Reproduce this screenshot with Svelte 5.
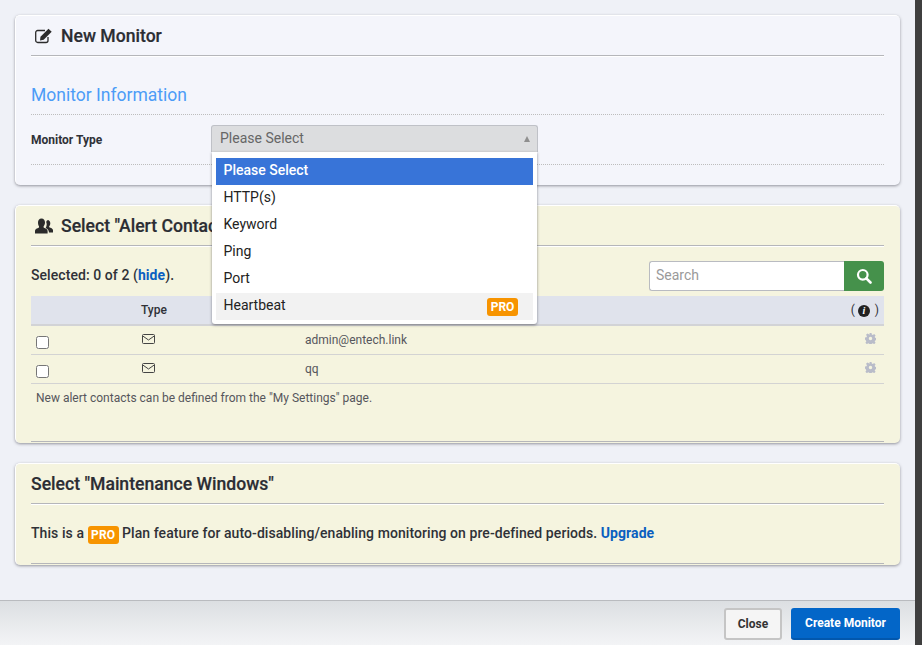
<script>
  let selected = 0;
  const contacts = ['admin@entech.link', 'qq'];
  const options = ['Please Select', 'HTTP(s)', 'Keyword', 'Ping', 'Port', 'Heartbeat'];
</script>

<div class="window">
  <div class="body">
    <section class="card blue first">
      <h2>
        <svg class="ico" width="18" height="16" viewBox="0 0 18 16">
          <path d="M13 9v3.500a2 2 0 0 1-2 2H2.700a2 2 0 0 1-2-2V4.500a2 2 0 0 1 2-2H10" fill="none" stroke="#2b2b2b" stroke-width="1.300"/>
          <path d="M5.500 8.800 13.500 0.800l3.200 3-8 8-3.700.6z" fill="#2b2b2b"/>
        </svg>
        New Monitor
      </h2>
      <h3>Monitor Information</h3>
      <div class="field">
        <label for="type">Monitor Type</label>
        <div class="select" id="type">
          <div class="trigger">
            <span>Please Select</span>
            <i class="arrow"></i>
          </div>
          <ul class="menu">
            {#each options as opt, i}
              <li class:active={i === 0} class:pro-row={i === 5}>
                {opt}
                {#if i === 5}<span class="pro">PRO</span>{/if}
              </li>
            {/each}
          </ul>
        </div>
      </div>
    </section>

    <section class="card yellow second">
      <h2>
        <svg class="ico" width="18" height="16" viewBox="0 0 18 16">
          <path d="M6.500 0.500c2.300 0 3.500 1.800 3.500 4 0 1.500-.6 2.900-1.400 3.700v1.300c1.900.8 4 1.700 4 3.300v2.700H0v-2.700c0-1.600 2.100-2.500 4-3.300V8.200C3.300 7.400 3 6 3 4.500c0-2.200 1.200-4 3.500-4z" fill="#2b2b2b"/>
          <path d="M12.500 2c1.700 0 2.800 1.400 2.800 3.200 0 1.200-.5 2.300-1.100 3v1c1.500.6 3.800 1.400 3.800 2.900v2.400h-4c0-2.400-1.500-3.600-3.300-4.500.6-1 1-2.300 1-3.500 0-1-.2-1.700-.5-2.500.4-1.200.9-2 2.300-2z" fill="#2b2b2b"/>
        </svg>
        Select "Alert Contacts To Notify"
      </h2>
      <div class="toolbar">
        <div class="count">Selected: {selected} of {contacts.length} (<a href="#hide">hide</a>).</div>
        <div class="search">
          <input placeholder="Search" />
          <button aria-label="Search">
            <svg width="16" height="16" viewBox="0 0 16 16">
              <circle cx="6.800" cy="6.800" r="4.800" fill="none" stroke="#fff" stroke-width="2.200"/>
              <path d="M10.300 10.300 14.500 14.500" stroke="#fff" stroke-width="2.600" stroke-linecap="round"/>
            </svg>
          </button>
        </div>
      </div>
      <table>
        <thead>
          <tr>
            <th class="c1"></th>
            <th class="c2">Type</th>
            <th class="c3"></th>
            <th class="c4">( <span class="info">i</span> )</th>
          </tr>
        </thead>
        <tbody>
          {#each contacts as c}
            <tr>
              <td><input type="checkbox" /></td>
              <td>
                <svg class="mail" width="13" height="10" viewBox="0 0 13 10">
                  <rect x="0.500" y="0.500" width="12" height="9" rx="1" fill="none" stroke="#444" />
                  <path d="M0.800 2 6.500 6 12.200 2" fill="none" stroke="#444" />
                </svg>
              </td>
              <td>{c}</td>
              <td class="gear-cell">
                <svg width="11" height="11" viewBox="0 0 16 16">
                  <path d="M6.500 0h3l.4 2.200 1.500.6 1.900-1.300 2.100 2.100-1.300 1.900.6 1.500 2.300.4v3l-2.300.4-.6 1.500 1.300 1.900-2.100 2.100-1.900-1.300-1.500.6-.4 2.300h-3l-.4-2.300-1.500-.6-1.900 1.300-2.100-2.100 1.300-1.900-.6-1.500L0 9.500v-3l2.200-.4.6-1.500L1.500 2.700l2.100-2.100 1.900 1.300L7 2.200z M8 5.500a2.500 2.500 0 1 0 0 5 2.500 2.500 0 0 0 0-5z" fill="#b9bcc9" fill-rule="evenodd"/>
                </svg>
              </td>
            </tr>
          {/each}
        </tbody>
      </table>
      <p class="note">New alert contacts can be defined from the "My Settings" page.</p>
      <div class="rule"></div>
    </section>

    <section class="card yellow third">
      <h2>Select "Maintenance Windows"</h2>
      <p class="upsell">
        This is a <span class="pro big">PRO</span> Plan feature for auto-disabling/enabling monitoring on pre-defined periods. <a href="#upgrade">Upgrade</a>
      </p>
      <div class="rule"></div>
    </section>
  </div>

  <footer>
    <button class="btn close">Close</button>
    <button class="btn create">Create Monitor</button>
  </footer>
</div>

<style>
  :global(body) {
    margin: 0;
    background: #3f3f3f;
    font-family: Roboto, "Liberation Sans", sans-serif;
    color: #2f3137;
  }

  .window {
    width: 915px;
    height: 645px;
    background: #eff1f7;
    display: flex;
    flex-direction: column;
    overflow: hidden;
  }

  .body {
    flex: 1;
    padding: 15px 15px 0;
    box-sizing: border-box;
  }

  .card {
    position: relative;
    box-sizing: border-box;
    padding: 0 16px 0 15px;
    border-radius: 5px;
    box-shadow: 0 1px 3px rgba(70, 70, 80, 0.55);
    border-top: 1px solid #fff;
    border-left: 1px solid #fff;
  }

  .blue { background: #f4f5fb; }
  .yellow { background: #f5f4df; }

  .first { height: 170px; margin-bottom: 20px; }
  .second { height: 238px; margin-bottom: 20px; }
  .third { height: 102px; }

  h2 {
    margin: 0;
    height: 40px;
    box-sizing: border-box;
    padding-top: 1px;
    font-size: 17.600px;
    line-height: 21px;
    font-weight: 500;
    display: flex;
    align-items: center;
    gap: 8px;
    color: #2b2d33;
    border-bottom: 1px solid #b5b6ba;
    box-shadow: 0 1px 0 #fff;
    -webkit-text-stroke: 0.2px #2b2d33;
  }

  .ico { margin-left: 4px; }

  h3 {
    margin: 28px 0 0;
    height: 31px;
    font-size: 17.500px;
    line-height: 22px;
    font-weight: 400;
    color: #4c9cf7;
    border-bottom: 1px dotted #bdbdbd;
    box-sizing: border-box;
  }

  .field {
    display: flex;
    align-items: flex-start;
    height: 50px;
    box-sizing: border-box;
    padding-top: 10px;
    border-bottom: 1px dotted #bdbdbd;
  }

  label {
    width: 180px;
    font-size: 12px;
    font-weight: 700;
    line-height: 30px;
  }

  .select {
    position: relative;
    width: 327px;
  }

  .trigger {
    height: 27px;
    box-sizing: border-box;
    background: #dcdddf;
    border: 1px solid #bfc1c7;
    border-bottom: 0;
    border-radius: 3px 3px 0 0;
    padding: 0 8px;
    font-size: 14px;
    line-height: 24px;
    color: #666;
    display: flex;
    justify-content: space-between;
    align-items: flex-start;
  }

  .arrow {
    width: 0;
    height: 0;
    border-left: 3.500px solid transparent;
    border-right: 3.500px solid transparent;
    border-bottom: 6px solid #8f8f8f;
    margin-right: -1px;
    margin-top: 10px;
  }

  .menu {
    position: absolute;
    top: 27px;
    left: 1px;
    right: 1px;
    z-index: 5;
    margin: 0;
    padding: 6px 4px 4px;
    list-style: none;
    background: #fff;
    border-radius: 0 0 3px 3px;
    box-shadow: 0 1px 3px rgba(60, 60, 70, 0.6);
  }

  .menu li {
    height: 27px;
    padding: 0 15px 0 7.500px;
    font-size: 14px;
    line-height: 25px;
    color: #222;
    display: flex;
    justify-content: space-between;
    align-items: flex-start;
  }

  .menu li.active { background: #3874d8; color: #fff; font-weight: 500; }
  .menu li.pro-row { background: #f2f2f2; }

  .pro {
    display: inline-block;
    background: #f79400;
    color: #fff;
    font-size: 12px;
    font-weight: 700;
    line-height: 18px;
    height: 18px;
    width: 31px;
    text-align: center;
    border-radius: 3px;
    margin-top: 5px;
  }

  .pro.big { margin-top: 0; vertical-align: -1px; }

  .toolbar {
    display: flex;
    justify-content: space-between;
    align-items: center;
    box-sizing: border-box;
    height: 50px;
    padding-top: 10px;
  }

  .count {
    font-size: 14px;
    font-weight: 500;
    letter-spacing: 0.07px;
    margin-bottom: 2px;
  }

  a {
    color: #0a5fc0;
    text-decoration: none;
    font-weight: 700;
  }

  .search {
    display: flex;
    height: 30px;
    width: 235px;
  }

  .search input {
    flex: 1;
    min-width: 0;
    box-sizing: border-box;
    border: 1px solid #b9bbc1;
    border-right: 0;
    border-radius: 3px 0 0 3px;
    padding: 0 6px 2px;
    font-family: inherit;
    font-size: 14px;
    background: #fff;
    outline: none;
  }

  .search input::placeholder { color: #9a9a9a; }

  .search button {
    width: 40px;
    border: 0;
    padding: 0;
    background: #45914b;
    border-radius: 0 3px 3px 0;
    display: flex;
    align-items: center;
    justify-content: center;
  }

  table {
    width: 100%;
    border-collapse: collapse;
    table-layout: fixed;
    font-size: 12px;
  }

  th {
    height: 28px;
    background: #e0e3ec;
    border-bottom: 2px solid #d2d3d6;
    font-weight: 500;
    text-align: left;
    padding: 0;
  }

  .c1 { width: 110px; }
  .c2 { width: 164px; }
  .c4 { width: 80px; text-align: right; padding-right: 5px; font-weight: 400; }

  .info {
    display: inline-block;
    width: 12px;
    height: 12px;
    border-radius: 50%;
    background: #222;
    color: #fff;
    font: italic 700 10px/12px "Liberation Serif", serif;
    text-align: center;
    margin: 0 2px 0 0;
  }

  td {
    height: 28px;
    padding: 0;
    border-bottom: 1px solid #d3d3d3;
    color: #55565c;
    vertical-align: middle;
  }

  td input {
    margin: 4px 0 0 5px;
    width: 13px;
    height: 13px;
    display: block;
  }

  .mail { display: block; margin: 0 0 2px 1px; }

  .gear-cell { text-align: right; padding-right: 8px; }
  .gear-cell svg { vertical-align: middle; margin-bottom: 3px; }

  .note {
    margin: 0;
    padding: 7px 0 0 5px;
    font-size: 12px;
    line-height: 14px;
    color: #55565c;
  }

  .rule {
    position: absolute;
    left: 15px;
    right: 16px;
    bottom: 1px;
    height: 1px;
    background: #b5b6ba;
  }

  .upsell {
    margin: 0;
    padding-top: 19px;
    font-size: 14px;
    font-weight: 500;
    line-height: 20px;
    letter-spacing: 0.07px;
  }

  footer {
    height: 45px;
    box-sizing: border-box;
    border-top: 1px solid #b9bbbf;
    background: linear-gradient(#dcdfe2, #f3f4f6);
    padding: 7px 15px 0 0;
    display: flex;
    justify-content: flex-end;
    align-items: flex-start;
    gap: 9px;
  }

  .btn {
    height: 32px;
    box-sizing: border-box;
    font-family: inherit;
    font-size: 12px;
    font-weight: 700;
    border-radius: 3px;
  }

  .close {
    width: 58px;
    background: #f5f5f5;
    border: 2px solid #c5c5c5;
    color: #333;
  }

  .create {
    width: 109px;
    background: #0366c8;
    border: 0;
    border-bottom: 2px solid #0257ad;
    color: #fff;
  }
</style>
